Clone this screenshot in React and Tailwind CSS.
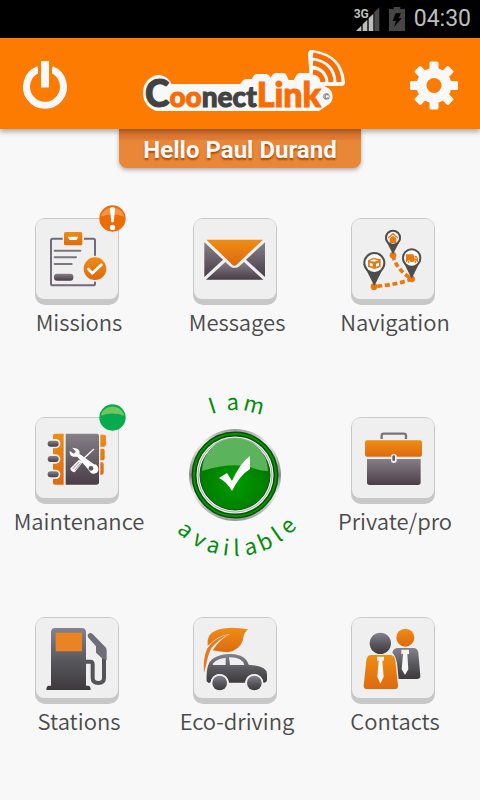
const CX = 75;
const CY = 91;

// Places each character of a label around the dial, centred on its own angle.
function ringLayout(chars, angles, advances, radius, below) {
  const xs = [];
  const ys = [];
  const rot = [];
  chars.forEach((_, i) => {
    const a = (angles[i] * Math.PI) / 180;
    const tilt = below ? -a : a;
    const px = CX + radius * Math.sin(a);
    const py = below ? CY + radius * Math.cos(a) : CY - radius * Math.cos(a);
    xs.push((px - (advances[i] / 2) * Math.cos(tilt)).toFixed(2));
    ys.push((py - (advances[i] / 2) * Math.sin(tilt)).toFixed(2));
    rot.push(((tilt * 180) / Math.PI).toFixed(1));
  });
  return { x: xs.join(" "), y: ys.join(" "), rotate: rot.join(" ") };
}

const topRing = ringLayout([..."I am"], [-18, -10, -2, 15], [7, 5, 12, 20], 65, false);
const bottomRing = ringLayout(
  [..."available"],
  [-42, -29, -17, -7, 1, 12, 24, 35, 46],
  [12, 11, 12, 6, 6, 12, 13, 6, 12],
  81,
  true
);

function Gradients() {
  return (
    <svg className="absolute h-0 w-0" aria-hidden="true">
      <defs>
        <linearGradient id="orange" x1="0" y1="0" x2="0" y2="1">
          <stop offset="0" stopColor="#ee8d12" />
          <stop offset="1" stopColor="#de6a10" />
        </linearGradient>
        <linearGradient id="plum" x1="0" y1="0" x2="0" y2="1">
          <stop offset="0" stopColor="#857f88" />
          <stop offset="1" stopColor="#4a3d47" />
        </linearGradient>
        <linearGradient id="slate" x1="0" y1="0" x2="0" y2="1">
          <stop offset="0" stopColor="#85828f" />
          <stop offset="0.55" stopColor="#56565a" />
          <stop offset="1" stopColor="#3e393c" />
        </linearGradient>
      </defs>
    </svg>
  );
}

function StatusBar() {
  return (
    <div className="flex h-[38px] items-center justify-end gap-[9px] bg-black px-[9px]">
      <svg className="h-6 w-[26px]" viewBox="0 0 78 72" role="img" aria-label="3G signal">
        <path d="M76 1V72H61V16Z" fill="#4a4a4a" />
        <path d="M58 20V72H44V34ZM40 38V72H26V52ZM22 56V72H6Z" fill="#bebebe" />
        <text x="-1" y="33" fontSize="36" className="font-['Roboto',sans-serif] font-bold" fill="#bebebe" stroke="#000" strokeWidth="4" paintOrder="stroke">3G</text>
      </svg>
      <svg className="h-6 w-4" viewBox="0 0 48 72" role="img" aria-label="Battery charging">
        <path d="M14 0H34V6H48V72H0V6H14Z" fill="#454545" />
        <path d="M20 19H36L29 34H38L15 61L21 42H11Z" fill="#000" />
      </svg>
      <time className="font-['Roboto',sans-serif] text-[23px] leading-6 text-[#bebebe]">04:30</time>
    </div>
  );
}

function Logo() {
  return (
    <svg className="h-[75px] w-[220px]" viewBox="0 0 220 75" role="img" aria-label="CoonectLink">
      <g fill="#f8f8f8" stroke="#f8f8f8" strokeWidth="8" strokeLinejoin="round">
        <path d="M27 33Q35 32 39 42H112L116 37H124L127 32H136L139 40L146 31H153L156 38H166L170 31H186V40L195 45A6 6 0 0 1 195 56L188 61H27Q17 57 17 47Q17 37 27 33Z" />
        <path d="M182 8Q209 12 211 36H184Z" />
      </g>
      <text x="15" y="61" className="font-['Lato',sans-serif] font-black" strokeWidth="1">
        <tspan fontSize="37" fill="#424242" stroke="#424242">C</tspan>
        <tspan fontSize="28" fill="#f96c04" stroke="#f96c04">oo</tspan>
        <tspan fontSize="28" fill="#424242" stroke="#424242">nect</tspan>
        <tspan fontSize="34" fill="#f96c04" stroke="#f96c04">Link</tspan>
      </text>
      <g fill="none" stroke="#f96c04" strokeWidth="5">
        <path d="M183 9Q208 13 209 36" />
        <path d="M183 17Q200 20 201 36" />
        <path d="M183 26Q192 27 193 36" />
      </g>
      <text x="193" y="54" fontSize="9" fill="#424242" className="font-['Liberation_Sans',sans-serif] font-bold">©</text>
    </svg>
  );
}

function Header() {
  return (
    <header className="relative z-10 flex h-[91px] items-center justify-between bg-[#fc7b00] pr-[22px] pl-[21px] shadow-[0_3px_5px_rgba(0,0,0,0.3)]">
      <button type="button" aria-label="Log out">
        <svg className="size-12 overflow-visible" viewBox="0 0 48 48">
          <path d="M17.500 9.500A18.500 18.500 0 1 0 30.500 9.500" fill="none" stroke="#f8f8f8" strokeWidth="7" />
          <path d="M17 0H31V15H17Z" fill="#fc7b00" />
          <path d="M20 1H28V27.500H20Z" fill="#f8f8f8" />
        </svg>
      </button>
      <Logo />
      <button type="button" aria-label="Settings">
        <svg className="size-12 overflow-visible" viewBox="-24 -25.500 48 48">
          <g fill="#f8f8f8">
            {[0, 45, 90, 135].map((a) => (
              <rect key={a} x="-4.500" y="-24" width="9" height="48" rx="1.500" transform={`rotate(${a})`} />
            ))}
            <circle r="17.500" />
          </g>
          <circle r="7.500" fill="#fc7b00" />
        </svg>
      </button>
    </header>
  );
}

function MissionsIcon() {
  return (
    <>
      <rect x="153" y="131" width="132" height="140" rx="5" fill="none" stroke="#72697a" strokeWidth="6" />
      <rect x="188" y="106" width="64" height="48" fill="#efefef" />
      <rect x="192" y="111" width="55" height="40" rx="5" fill="url(#orange)" />
      <path d="M204 125H234Q232 135 226 135H212Q206 135 204 125Z" fill="#fff" />
      <path d="M164 167H241M164 187H228M164 207H215" stroke="#7b7580" strokeWidth="6" strokeLinecap="round" />
      <rect x="162" y="236" width="58" height="21" rx="9" fill="url(#plum)" />
      <circle cx="285" cy="221" r="39" fill="#efefef" />
      <circle cx="285" cy="221" r="34" fill="url(#orange)" />
      <path d="M265 222L277 235L304 209" fill="none" stroke="#fff" strokeWidth="8" strokeLinecap="round" strokeLinejoin="round" />
    </>
  );
}

function MessagesIcon() {
  return (
    <>
      <path d="M133 142L189 194L133 246Z" fill="url(#plum)" />
      <path d="M315 142L258 194L315 246Z" fill="url(#plum)" />
      <path d="M138 254L196 201L212 215Q224 222 236 215L252 201L310 254Z" fill="url(#plum)" />
      <path d="M139 134H309L230 209Q223 215 217 209Z" fill="url(#orange)" />
    </>
  );
}

function Pin({ x, y, r, tip }) {
  return (
    <>
      <path d={`M${x - r} ${y + 3}L${x} ${tip}L${x + r} ${y + 3}Z`} fill="#4d4d4d" />
      <circle cx={x} cy={y} r={r} fill="#4d4d4d" />
      <circle cx={x} cy={y} r={r - 6} fill="#fff" />
    </>
  );
}

function NavigationIcon() {
  return (
    <>
      <path d="M219 181Q226 220 275 252Q235 268 162 275" fill="none" stroke="#e67914" strokeWidth="11" strokeDasharray="15 8" />
      <circle cx="219" cy="181" r="10" fill="#e67914" />
      <circle cx="275" cy="252" r="10" fill="#e67914" />
      <circle cx="162" cy="275" r="10" fill="#e67914" />
      <Pin x={219} y={128} r={24} tip={178} />
      <Pin x={275} y={189} r={29} tip={251} />
      <Pin x={163} y={204} r={33} tip={273} />
      <path d="M204 129L219 116L234 129" fill="none" stroke="#e67914" strokeWidth="4" />
      <path d="M209 130L219 122L229 130V144H209Z" fill="#e67914" />
      <path d="M258 178H281V182H289L294 190V201H258Z" fill="#e67914" />
      <circle cx="266" cy="201" r="4" fill="#e67914" stroke="#fff" strokeWidth="2" />
      <circle cx="286" cy="201" r="4" fill="#e67914" stroke="#fff" strokeWidth="2" />
      <path d="M284 184V190H291" fill="none" stroke="#fff" strokeWidth="2" />
      <path d="M144 196L160 188L182 193V216L163 222L144 215Z" fill="#e67914" />
      <path d="M149 197L161 193L175 196L163 200ZM149 203L158 206V215L149 211ZM168 206L177 203V212L168 215Z" fill="#fff" />
    </>
  );
}

function MaintenanceIcon() {
  return (
    <>
      <path d="M165 132H191V285H165Q159 285 159 279V138Q159 132 165 132Z" fill="url(#orange)" />
      <path d="M197 132H290Q297 132 297 139V278Q297 285 290 285H197Z" fill="url(#plum)" />
      <path d="M301 135H312Q318 135 318 141V164Q318 171 312 171H301ZM301 177H309Q314 177 314 183V206Q314 212 309 212H301ZM301 218H306Q311 218 311 224V248Q311 255 306 255H301Z" fill="url(#orange)" />
      {[162, 208, 254].map((y) => (
        <g key={y}>
          <rect x="138" y={y - 14} width="43" height="28" rx="14" fill="#efefef" />
          <rect x="143" y={y - 9} width="33" height="18" rx="9" fill="url(#plum)" />
        </g>
      ))}
      <path d="M216 174L227 185L222 192L209 184Q207 198 220 201L232 201L268 243A14 14 0 1 0 282 224L239 193Q241 174 216 174Z" fill="#fff" />
      <circle cx="273" cy="236" r="7" fill="#5d535c" />
      <path d="M281 179L243 214" stroke="#fff" strokeWidth="4" strokeLinecap="round" />
      <path d="M237 210L248 218L224 248Q211 245 211 236Z" fill="#fff" />
      <path d="M238 217L218 238M242 221L224 242" stroke="#5d535c" strokeWidth="2" />
    </>
  );
}

function BriefcaseIcon() {
  return (
    <>
      <path d="M185 148V138Q185 132 191 132H252Q258 132 258 138V148" fill="none" stroke="#78737d" strokeWidth="7" />
      <rect x="135" y="152" width="171" height="49" rx="6" fill="url(#orange)" />
      <path d="M141 208H302V278Q302 286 294 286H149Q141 286 141 278Z" fill="url(#plum)" />
      <rect x="213" y="193" width="17" height="27" rx="8" fill="#efefef" />
      <rect x="217" y="197" width="8" height="17" rx="4" fill="#665d67" />
    </>
  );
}

function StationsIcon() {
  return (
    <>
      <path d="M153 97Q153 84 166 84H245Q258 84 258 97V257H264Q272 257 272 270H139Q139 257 147 257H153Z" fill="url(#slate)" />
      <rect x="167" y="98" width="79" height="56" fill="#ea8322" />
      <path d="M258 185H271Q278 185 278 194V234Q278 249 295 249Q312 249 312 234V154" fill="none" stroke="#555357" strokeWidth="12" />
      <path d="M263 104Q268 96 277 101L318 143Q320 147 320 153V181L306 175L288 158V139L264 112Z" fill="#6f6d77" />
    </>
  );
}

function EcoIcon() {
  return (
    <>
      <path d="M132 219Q128 176 142 145Q162 113 209 102Q176 117 154 145Q145 161 139 192Z" fill="#e57a1f" />
      <path d="M143 132Q140 98 179 88Q211 79 264 88Q250 100 249 120Q239 151 203 157Q178 155 158 151Q177 119 211 101Q171 107 143 138Z" fill="url(#orange)" />
      <path d="M140 244Q137 191 158 176Q180 161 214 162Q257 164 266 194Q320 198 321 221V239Q321 248 310 248Q306 224 283 222Q259 223 255 248H207Q202 223 179 222Q155 224 151 248H145Z" fill="url(#slate)" />
      <path d="M158 195Q162 178 197 173V195ZM207 172Q247 171 253 195H210Z" fill="#efefef" />
      <circle cx="179" cy="249" r="27" fill="#efefef" />
      <circle cx="283" cy="249" r="27" fill="#efefef" />
      <circle cx="179" cy="249" r="22" fill="url(#slate)" />
      <circle cx="283" cy="249" r="22" fill="url(#slate)" />
    </>
  );
}

function ContactsIcon() {
  return (
    <>
      <circle cx="256" cy="113" r="27" fill="url(#orange)" />
      <path d="M217 158Q220 144 234 144H280Q293 144 295 158L301 228Q301 237 291 237H236L231 190Q227 167 217 158Z" fill="url(#slate)" />
      <path d="M244 149H267V162H262L265 208L255 225L245 208L249 162H244Z" fill="#f5f5f5" />
      <circle cx="181" cy="130" r="32" fill="url(#slate)" />
      <path d="M154 165H211Q223 165 226 181L234 257Q234 267 224 267H141Q131 267 131 257L139 181Q141 165 154 165Z" fill="url(#orange)" />
      <path d="M171 170H192V182H187L191 230L181 251L172 230L176 182H171Z" fill="#f5f5f5" />
    </>
  );
}

function Badge({ alert }) {
  return (
    <svg className="absolute -top-[13px] -right-[7px] size-[27px]" viewBox="0 0 82 82" aria-hidden="true">
      <circle cx="41" cy="41" r="40" fill={alert ? "#ee6b05" : "#07ab4d"} />
      <path d="M5 36A37 37 0 0 1 77 36Q41 22 5 36Z" fill={alert ? "#f79448" : "#6cc85a"} />
      {alert && (
        <>
          <path d="M33 9Q41 3 49 9L45 51Q41 56 37 51Z" fill="#fff" />
          <circle cx="41" cy="68" r="8" fill="#fff" />
        </>
      )}
    </svg>
  );
}

function Tile({ label, view, badge, children }) {
  return (
    <button type="button" className="flex flex-col items-center">
      <span className="relative mr-1 block rounded-[10px] bg-[#c7c7c7] p-px pb-1.5">
        <span className="block rounded-lg bg-[#efefef]">
          <svg className="h-20 w-[82px]" viewBox={view} aria-hidden="true">
            {children}
          </svg>
        </span>
        {badge && <Badge alert={badge === "alert"} />}
      </span>
      <span className="font-['Noto_Sans_CJK_SC',sans-serif] text-[22px] leading-8 font-[350] whitespace-nowrap text-[#4a4a4a]">{label}</span>
    </button>
  );
}

function Availability() {
  return (
    <button type="button" className="mr-1">
      <svg className="h-[186px] w-[150px]" viewBox="0 0 150 186">
        <defs>
          <linearGradient id="chrome" x1="0" y1="0" x2="0" y2="1">
            <stop offset="0" stopColor="#999" />
            <stop offset="0.15" stopColor="#eee" />
            <stop offset="0.5" stopColor="#8a8a8a" />
            <stop offset="0.7" stopColor="#eee" />
            <stop offset="1" stopColor="#999" />
          </linearGradient>
          <radialGradient id="dial" cx="0.5" cy="0.6" r="0.6">
            <stop offset="0" stopColor="#009c00" />
            <stop offset="1" stopColor="#007400" />
          </radialGradient>
        </defs>
        <g className="font-['Noto_Sans_CJK_SC',sans-serif]" fontSize="22" fill="#008c0c">
          <text {...topRing}>I am</text>
          <text {...bottomRing}>available</text>
        </g>
        <circle cx={CX} cy={CY} r="46" fill="url(#chrome)" />
        <circle cx={CX} cy={CY} r="41" fill="#f0f0f0" stroke="#045304" strokeWidth="5" />
        <circle cx={CX} cy={CY} r="41" fill="none" stroke="#089008" strokeWidth="2" />
        <circle cx={CX} cy={CY} r="37" fill="none" stroke="#aaa" strokeWidth="1" />
        <circle cx={CX} cy={CY} r="35" fill="url(#dial)" stroke="#075707" strokeWidth="1" />
        <path d="M42 87A33 33 0 0 1 108 87Q100 87 90 83Q70 78 42 87Z" fill="#5bb35b" />
        <path d="M59 94L67 89L72 97Q80 79 90 72V85Q80 91 72 107Q67 98 59 94Z" fill="#fff" />
      </svg>
    </button>
  );
}

export default function App() {
  return (
    <div className="flex min-h-screen flex-col bg-[#f8f8f8]">
      <Gradients />
      <StatusBar />
      <Header />
      <h1 className="self-center rounded-b-lg bg-[#e98739] bg-linear-to-b from-[#df7832] from-25% to-[#e98739] to-30% px-6 pt-[7px] pb-1 font-['Roboto',sans-serif] text-2xl leading-7 font-bold text-[#f8f8f8] shadow-[0_2px_4px_rgba(0,0,0,0.3)] [text-shadow:0_2px_2px_#a64b00]">
        Hello Paul Durand
      </h1>
      <main className="grid flex-1 auto-rows-fr grid-cols-3 place-items-center pt-2.5 pr-1.5 pb-6">
        <Tile label="Missions" view="108 72 246 240" badge="alert"><MissionsIcon /></Tile>
        <Tile label="Messages" view="102 72 246 240"><MessagesIcon /></Tile>
        <Tile label="Navigation" view="96 72 246 240"><NavigationIcon /></Tile>
        <Tile label="Maintenance" view="108 85 246 240" badge="ok"><MaintenanceIcon /></Tile>
        <Availability />
        <Tile label="Private/pro" view="96 85 246 240"><BriefcaseIcon /></Tile>
        <Tile label="Stations" view="108 54 246 240"><StationsIcon /></Tile>
        <Tile label="Eco-driving" view="102 54 246 240"><EcoIcon /></Tile>
        <Tile label="Contacts" view="96 54 246 240"><ContactsIcon /></Tile>
      </main>
    </div>
  );
}
